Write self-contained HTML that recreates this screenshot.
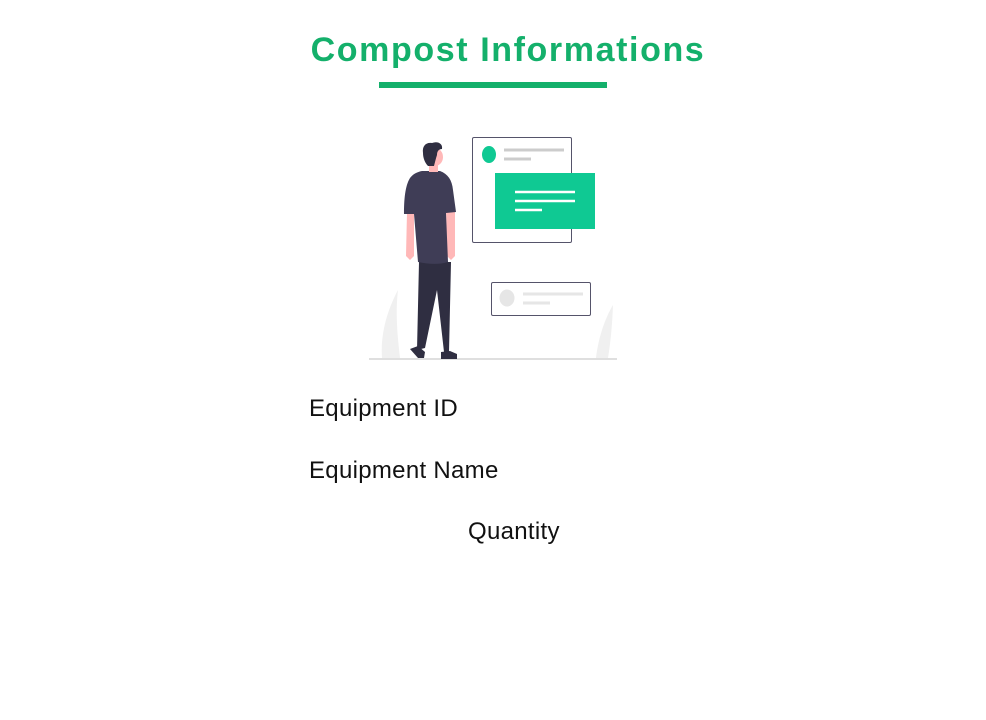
<!DOCTYPE html>
<html><head><meta charset="utf-8"><style>
html,body{margin:0;padding:0;background:#fff;width:986px;height:720px;overflow:hidden;position:relative}
.t{position:absolute;left:0;width:1016px;top:31px;text-align:center;font-family:"Liberation Sans",sans-serif;font-weight:bold;font-size:34px;color:#14b06b;letter-spacing:1.6px}
.u{position:absolute;left:379px;top:82px;width:228px;height:6px;background:#14b06b}
.l{position:absolute;font-family:"Liberation Sans",sans-serif;font-size:24px;color:#111;line-height:24px;letter-spacing:0.3px}
</style></head><body>
<div class="t">Compost Informations</div>
<div class="u"></div>
<svg style="position:absolute;left:0;top:0" width="986" height="720">
<path d="M382 358 C380 330 390 305 398 290 C395 315 398 340 400 358Z" fill="#f0f0f0"/>
<path d="M596 358 C598 340 604 320 613 305 C612 330 610 345 608 358Z" fill="#f0f0f0"/>
<line x1="369" y1="359" x2="617" y2="359" stroke="#ccc" stroke-width="1.2"/>
<rect x="472.5" y="137.5" width="99" height="105" rx="1.5" fill="#fff" stroke="#55536a" stroke-width="1"/>
<ellipse cx="489" cy="154.5" rx="7" ry="8.5" fill="#0fc993"/>
<line x1="504" y1="150" x2="564" y2="150" stroke="#ccc" stroke-width="3"/>
<line x1="504" y1="159" x2="531" y2="159" stroke="#ccc" stroke-width="3"/>
<rect x="495" y="173" width="100" height="56" fill="#0fc993"/>
<line x1="515" y1="192" x2="575" y2="192" stroke="#fff" stroke-width="2.5"/>
<line x1="515" y1="201" x2="575" y2="201" stroke="#fff" stroke-width="2.5"/>
<line x1="515" y1="210" x2="542" y2="210" stroke="#fff" stroke-width="2.5"/>
<rect x="491.5" y="282.5" width="99" height="33" rx="1.5" fill="#fff" stroke="#55536a" stroke-width="1"/>
<ellipse cx="507" cy="298" rx="7.5" ry="8.5" fill="#e6e6e6"/>
<line x1="523" y1="294" x2="583" y2="294" stroke="#e6e6e6" stroke-width="3"/>
<line x1="523" y1="303" x2="550" y2="303" stroke="#e6e6e6" stroke-width="3"/>
<!-- person -->
<path d="M407 212 L414 212 L414 256 L410 260 L406 256Z" fill="#ffb8b8"/>
<path d="M446 208 L455 208 L455 256 L451 260 L447 256Z" fill="#ffb8b8"/>
<path d="M419 262 L451 262 L449 352 L444 352 L437 290 L425 348 L417 350Z" fill="#2f2e41"/>
<path d="M410 349 L418 346 L425 352 L424 358 L418 358Z" fill="#2f2e41"/>
<path d="M441 352 L450 351 L457 354 L457 359 L441 359Z" fill="#2f2e41"/>
<path d="M422 171 L440 171 C448 174 452 180 453 190 L456 212 L446 213 L448 262 C438 265 428 264 418 262 L414 214 L404 214 C404 200 405 186 410 178 C413 174 417 172 422 171Z" fill="#3f3d56"/>
<rect x="429" y="160" width="9" height="12" fill="#ffb8b8"/>
<ellipse cx="435" cy="157" rx="8" ry="9" fill="#ffb8b8"/>
<path d="M423 153 C422 146 426 142 432 143 C437 141 443 143 442 149 C439 149 437 151 437 155 C436 158 435 162 434 166 L428 166 C425 163 423 158 423 153Z" fill="#2f2e41"/>
</svg>
<div class="l" style="left:309px;top:397px">Equipment ID</div>
<div class="l" style="left:309px;top:459px">Equipment Name</div>
<div class="l" style="left:468px;top:520px">Quantity</div>
</body></html>
